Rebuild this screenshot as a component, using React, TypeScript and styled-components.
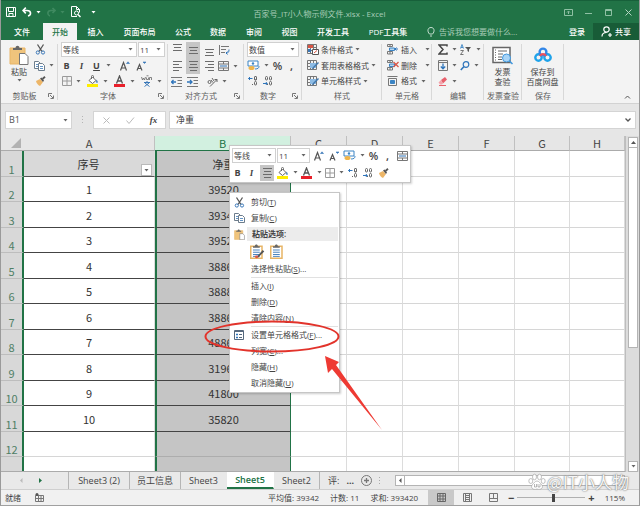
import React from "react";
import styled, { createGlobalStyle, css } from "styled-components";

const ui = `"Open Sans", "Noto Sans CJK SC", sans-serif`;
const green = "#217346";

const Global = createGlobalStyle`
  * { box-sizing: border-box; }
  html, body { margin: 0; height: 100%; }
  body { font: 8px/12px ${ui}; color: #444; background: #e6e6e6; overflow: hidden; }
  button, input, select { font: inherit; color: inherit; border: 0; padding: 0; margin: 0; background: none; }
  svg { display: block; flex: none; }
`;

/* ---------- window ---------- */
const Window = styled.div`
  height: 100vh; display: flex; flex-direction: column; position: relative;
  border-left: 1px solid #9a9a9a; border-right: 1px solid #9a9a9a; border-bottom: 1px solid #a0a0a0;
`;
const TitleBar = styled.header`
  display: grid; grid-template-columns: 1fr auto 1fr; align-items: center; height: 23px;
  background: ${green}; border-top: 1px solid #17603a; color: #a9cdb8; padding: 0 5px 3px 4px;
`;
const Title = styled.h1`font: 8px/18px ${ui}; margin: 0; padding-top: 4px;`;
const TitleGroup = styled.div<{ $end?: boolean }>`
  display: flex; align-items: center; gap: ${p => (p.$end ? 8 : 5)}px;
  justify-content: ${p => (p.$end ? "flex-end" : "flex-start")};
`;
const IconButton = styled.button<{ $on?: boolean }>`
  display: inline-flex; align-items: center; justify-content: center; gap: 4px; min-width: 12px; height: 14px;
  ${p => p.$on && css`background: #c6c6c6; width: 14px; height: 16px;`}
`;
const Tabs = styled.nav`
  display: flex; height: 17px; background: ${green}; color: #fff;
`;
const Tab = styled.button<{ $on?: boolean; $w: number }>`
  width: ${p => p.$w}px; height: 17px; font-size: 8px; font-weight: 500; white-space: nowrap;
  ${p => p.$on && css`background: #f3f3f3; color: ${green};`}
`;
const Tell = styled.label`
  display: flex; flex: 1; min-width: 0; align-items: center; gap: 4px; color: #a9cdb8; padding-left: 11px;
  input { width: 100%; min-width: 0; font-size: 8px; outline: 0; }
  input::placeholder { color: #a9cdb8; opacity: 1; }
`;
const Share = styled.button`
  display: flex; align-items: center; justify-content: center; gap: 3px; width: 46px; background: #185c37; color: #fff;
  font-weight: 500;
`;

/* ---------- ribbon ---------- */
const Ribbon = styled.section`
  display: flex; height: 64px; background: #f3f3f3; border-bottom: 1px solid #d2d2d2; position: relative;
`;
const Group = styled.div<{ $w: number }>`
  width: ${p => p.$w}px; flex: none; display: flex; flex-direction: column; padding: 2px 0 1px;
  background: linear-gradient(#d8d8d8, #d8d8d8) right center / 1px 56px no-repeat;
`;
const GroupBody = styled.div<{ $pad?: number }>`
  flex: 1; display: flex; min-height: 0; padding-left: ${p => p.$pad ?? 3}px;
`;
const GroupName = styled.div<{ $launch?: boolean }>`
  display: grid; grid-template-columns: 1fr ${p => (p.$launch ? 10 : 0)}px; align-items: center; height: 13px;
  color: #5c5c5c; white-space: nowrap;
  span { justify-self: center; }
`;
const Stack = styled.div`display: flex; flex-direction: column;`;
const Line = styled.div<{ $gap?: number; $pad?: number }>`
  display: flex; align-items: center; height: 16px; gap: ${p => p.$gap ?? 3}px; padding-left: ${p => p.$pad ?? 0}px;
`;
const BigButton = styled.button<{ $w: number }>`
  width: ${p => p.$w}px; display: flex; flex-direction: column; align-items: center; line-height: 10px; padding-top: 3px; gap: 2px;
  white-space: nowrap;
`;
const BigIcon = styled.span`height: 20px; display: grid; place-items: center;`;
const Command = styled.button<{ $w?: number }>`
  display: flex; align-items: center; gap: 2px; height: 16px; white-space: nowrap;
  ${p => p.$w && css`width: ${p.$w}px;`}
`;
const Grow = styled.span`flex: 1;`;
const Collapse = styled.button`align-self: flex-end; height: 12px; width: 18px;`;
const Letter = styled.button<{ $kind?: "b" | "i" | "u" | "n" }>`
  width: 11px; height: 14px; font-size: 9px; line-height: 14px; font-weight: 700; color: #444;
  ${p => p.$kind === "i" && css`font-style: italic; font-family: "Liberation Serif", serif;`}
  ${p => p.$kind === "u" && css`text-decoration: underline;`}
  ${p => p.$kind === "n" && css`font-size: 11px; font-weight: 600;`}
`;
const Pick = styled.span<{ $w: number }>`
  display: inline-grid; align-items: center; width: ${p => p.$w}px; height: 15px; background: #fff; border: 1px solid #d0d0d0;
  select { grid-area: 1 / 1; appearance: none; width: 100%; height: 13px; padding-left: 1px; font-size: 8px; outline: 0; }
  svg { grid-area: 1 / 1; justify-self: end; margin-right: 3px; pointer-events: none; }
`;

/* ---------- formula bar ---------- */
const FormulaBar = styled.section`
  display: flex; height: 32px; padding: 7px 3px 7px 4px; background: #e6e6e6; align-items: stretch;
`;
const NameBox = styled.label`
  display: flex; align-items: center; width: 67px; background: #fff; border: 1px solid #d4d4d4; padding: 0 3px;
  input { width: 100%; min-width: 0; font-size: 9px; outline: 0; color: #555; }
`;
const Grip = styled.span`
  width: 21px; display: flex; align-items: center; justify-content: center; color: #b4b4b4;
`;
const FxButtons = styled.div`
  display: flex; width: 73px; align-items: center; justify-content: space-around; background: #fff; border: 1px solid #d4d4d4;
`;
const FxInput = styled.label`
  flex: 1; display: flex; align-items: center; margin-left: 3px; background: #fff; border: 1px solid #d4d4d4; padding: 0 4px 0 6px;
  input { flex: 1; min-width: 0; font-size: 9px; outline: 0; }
`;

/* ---------- sheet ---------- */
const SheetArea = styled.main`flex: 1; min-height: 0; display: flex; background: #e6e6e6;`;
const SheetClip = styled.div`flex: 1; min-width: 0; overflow: hidden; border-bottom: 1px solid #ababab;`;
const Grid = styled.table`
  width: 100%; table-layout: fixed; border-collapse: separate; border-spacing: 0;
  font: 11px/14px "Noto Sans CJK SC", sans-serif; color: #333; text-align: center;
`;
const ColHead = styled.th<{ $on?: boolean }>`
  height: 15px; padding: 0; font-weight: 400; line-height: 14px; color: ${p => (p.$on ? green : "#444")};
  background: ${p => (p.$on ? "#d2f0e0" : "#e6e6e6")};
  border-right: 1px solid #c0c0c0; border-bottom: 1px solid ${p => (p.$on ? green : "#ababab")};
`;
const Corner = styled.th`
  padding: 0 3px 2px 0; background: #e6e6e6; border-bottom: 1px solid #ababab; vertical-align: bottom;
  svg { margin-left: auto; }
`;
const Row = styled.tr`
  height: 26px;
  &:nth-child(even) { height: 25px; }
`;
const RowHead = styled.th`
  padding: 0; font-weight: 400; vertical-align: bottom; color: #4f7f66; background: #d8d8d8;
  border-bottom: 1px solid #bdbdbd; border-right: 2px solid ${green};
`;
const Cell = styled.td<{ $kind: "head" | "data" | "sel" | "selEmpty" | "empty" }>`
  padding: 0; vertical-align: middle; border-right: 1px solid #dcdcdc; border-bottom: 1px solid #d6d6d6; background: #fff;
  ${p => p.$kind === "head" && css`background: #d9d9d9; border-bottom-color: #555;`}
  ${p => p.$kind === "data" && css`border-bottom-color: #444;`}
  ${p => (p.$kind === "sel" || p.$kind === "selEmpty") && css`
    background: #c5c5c5; border-left: 2px solid ${green}; border-right: 1px solid ${green};
    border-bottom-color: ${p.$kind === "sel" ? "#444" : "#adadad"};`}
`;
const HeadCell = styled.div`
  display: grid; grid-template-columns: 12px 1fr 12px; align-items: end; height: 25px; padding-right: 1px;
  span { align-self: center; }
`;
const Filter = styled.button`
  width: 11px; height: 12px; background: #fff; border: 1px solid #b9b9b9; display: grid; place-items: center;
`;
const VScroll = styled.div`
  width: 14px; display: flex; flex-direction: column; align-items: flex-end; padding: 1px 1px 0 3px; background: #dcdcdc;
  border-left: 1px solid #bdbdbd;
`;
const ScrollButton = styled.button`
  width: 10px; height: 11px; background: #fff; border: 1px solid #b4b4b4; display: grid; place-items: center; flex: none;
`;
const VThumb = styled.div`width: 10px; height: 200px; background: #fff; border: 1px solid #b4b4b4; border-top: 0;`;

/* ---------- bottom ---------- */
const SheetTabs = styled.nav`
  display: flex; height: 18px; align-items: stretch; background: #e9e9e9; font-size: 9px; border-bottom: 1px solid #cfcfcf;
`;
const SheetNav = styled.div`
  width: 68px; display: flex; align-items: center; gap: 16px; padding-left: 18px; border-right: 1px solid #b5b5b5;
`;
const SheetTab = styled.button<{ $w: number; $on?: boolean; $line?: boolean }>`
  width: ${p => p.$w}px; flex: none; white-space: nowrap;
  border-right: 1px solid ${p => (p.$line ? "#b5b5b5" : "transparent")};
  ${p => p.$on && css`background: #fff; color: ${green}; font-weight: 600; border-bottom: 2px solid ${green};`}
`;
const TabTools = styled.div`display: flex; align-items: center; gap: 7px; padding-left: 8px; width: 75px; flex: none;`;
const HScroll = styled.div`flex: 1; display: flex; align-items: center; padding-right: 14px;`;
const HThumb = styled.div`flex: 1; height: 11px; background: #fff; border: 1px solid #b4b4b4; border-left: 0;`;
const Status = styled.footer`
  display: flex; height: 15px; align-items: center; background: #f1f1f1; padding: 0 14px 0 4px; white-space: nowrap;
`;
const Stats = styled.div`display: flex; flex: 1; justify-content: flex-end; gap: 11px; padding-right: 10px;`;
const ViewButton = styled.button<{ $on?: boolean }>`
  width: 26px; height: 15px; display: grid; place-items: center; background: ${p => (p.$on ? "#c9c9c9" : "transparent")};
`;
const Zoom = styled.label`
  display: flex; align-items: center; gap: 3px; margin-left: 2px; font-size: 8px; color: #444;
  b { font-size: 11px; line-height: 12px; }
  input { appearance: none; width: 68px; height: 12px; background: linear-gradient(#b0b0b0, #b0b0b0) center / 100% 1px no-repeat; }
  input::-webkit-slider-thumb { appearance: none; width: 3px; height: 8px; background: #444; }
  output { padding-left: 7px; }
`;

/* ---------- floating ---------- */
const MiniBar = styled.div`
  position: absolute; left: 228px; top: 145px; width: 182px; padding: 1px 2px; background: #fff;
  border: 1px solid #c6c6c6; box-shadow: 1px 1px 2px rgba(0,0,0,.18);
`;
const MiniLine = styled.div`display: flex; align-items: center; height: 17px; gap: 3px;`;
const Menu = styled.menu`
  position: absolute; left: 228px; top: 192px; width: 111px; margin: 0; padding: 1px; list-style: none; background: #fff;
  border: 1px solid #c6c6c6; box-shadow: 1px 1px 2px rgba(0,0,0,.2);
`;
const Item = styled.li`
  button { display: grid; grid-template-columns: 16px 1fr; align-items: center; justify-items: center; gap: 4px; width: 100%; height: 16px; }
  button > span { justify-self: start; white-space: nowrap; }
`;
const PasteHead = styled.li`
  display: grid; grid-template-columns: 16px 1fr; align-items: center; justify-items: center; height: 16px;
  font-weight: 600;
  span { justify-self: stretch; background: #ececec; padding-left: 5px; line-height: 14px; }
`;
const PasteRow = styled.li`display: flex; gap: 5px; height: 19px; align-items: center; padding-left: 19px;`;
const Rule = styled.li`height: 1px; margin: 0 0 0 20px; background: #e1e1e1;`;
const Overlay = styled.svg`position: absolute; left: 190px; top: 310px; pointer-events: none;`;
const Watermark = styled.div`
  position: absolute; right: 10px; bottom: 12px; display: flex; align-items: center; gap: 1px;
  font: 17px/22px "Noto Sans CJK SC", sans-serif; color: rgba(255,255,255,.95); pointer-events: none;
  text-shadow: 0 0 1px #777, 0 0 2px #888;
`;

/* ---------- icons ---------- */
const Caret = ({ c = "#666" }: { c?: string }) => (
  <svg width="5" height="3" viewBox="0 0 5 3"><path d="M0.5 0h4L2.5 2.5z" fill={c} /></svg>
);
const CaretUp = () => <svg width="5" height="3" viewBox="0 0 5 3"><path d="M0 3h5L2.5 0z" fill="#555" /></svg>;
const Launcher = () => (
  <svg width="6" height="6" viewBox="0 0 6 6" fill="none" stroke="#777"><path d="M.5 4V.5H4M2 2l3 3M5.5 2.5v3h-3" /></svg>
);
const Save = () => (
  <svg width="10" height="10" viewBox="0 0 10 10" fill="none" stroke="#fff"><path d="M.5.5h9v9h-9zM2.500.5v4h5v-4M3 9.500V6.500h4v3" /></svg>
);
const Undo = ({ flip }: { flip?: boolean }) => (
  <svg width="10" height="10" viewBox="0 0 10 10" fill="none" stroke={flip ? "#3f8a60" : "#fff"} strokeWidth="1.600">
    {flip ? <path d="M9 3.500H5C1 3.500 1 8 4 9M6.500 1L9 3.500 6.500 6" /> : <path d="M1 3.500h4c4.500 0 4.500 4.500 1 5.500M3.800.6L1 3.500l2.800 2.900" />}
  </svg>
);
const Preview = () => (
  <svg width="10" height="12" viewBox="0 0 10 12" fill="none" stroke="#fff"><path d="M6 10.500H.5V.5h5l3 3v3M5.500.5v3h3" /><circle cx="5.500" cy="7" r="2" /><path d="M7 8.500l2.500 2.500" strokeWidth="1.500" /></svg>
);
const Scissors = () => (
  <svg width="11" height="11" viewBox="0 0 11 11" fill="none"><path d="M2.500.5L7 7.500M8.500.5L4 7.500" stroke="#555" strokeWidth="1.300" /><circle cx="2.800" cy="8.500" r="1.600" stroke="#3b78b8" /><circle cx="8" cy="8.500" r="1.600" stroke="#3b78b8" /></svg>
);
const Copy = () => (
  <svg width="11" height="10" viewBox="0 0 11 10" fill="#fff" stroke="#6d7d8c"><path d="M.5.5h4l1.500 1.500v5.500H.5z" /><path d="M4.500 2.500h4L10.500 4.500v5h-6z" /><path d="M6 5.500h3M6 7.500h3M2 3.500h2M2 5.500h2" stroke="#3b78b8" strokeWidth=".8" /></svg>
);
const Brush = () => (
  <svg width="11" height="10" viewBox="0 0 11 10"><path d="M1 5l4-2 3 3-3 4C3 9 1.500 7.500 1 5z" fill="#edb668" /><path d="M5 2.500L6.500 1.500 9 4.500 8 6z" fill="#555" /><path d="M7.500 3L10 .8" stroke="#555" strokeWidth="1.800" /></svg>
);
const Clipboard = ({ s = 20, kind = "page" }: { s?: number; kind?: "page" | "lines" | "brush" }) => (
  <svg width={s} height={s} viewBox="0 0 20 20">
    <path d="M1 3h15v16H1z" fill={kind === "page" ? "#f0c47c" : "#fff"} stroke="#e8b566" strokeWidth={kind === "page" ? 1 : 2} />
    <path d="M4 5V3h2.500c0-3 4-3 4 0H13v2z" fill="#666" />
    {kind === "page" && <path d="M10.500 8.500h5.500l3 3v8h-8.500z" fill="#fff" stroke="#777" />}
    {kind !== "page" && <path d="M4 8h9M4 11h9M4 14h9M4 16.500h9" stroke="#3b78b8" strokeWidth="1.200" />}
    {kind === "brush" && <path d="M9 17l8-9 2 2-8 8z" fill="#555" />}
    {kind === "brush" && <path d="M6 16l4-1 1 3c-2 2-4 1-5-2z" fill="#d8584a" />}
  </svg>
);
const Borders = () => (
  <svg width="10" height="10" viewBox="0 0 10 10" fill="none" stroke="#9a9a9a"><path d="M.5.5h9v9h-9zM5 1v8M1 5h8" /></svg>
);
const Fill = () => (
  <svg width="12" height="12" viewBox="0 0 12 12"><path d="M2 5.500L5.500 2 9 5.500 5.500 8.500z" fill="#fff" stroke="#666" /><path d="M4.500 4V1.500c0-1.500 2-1.500 2 0V3" fill="none" stroke="#666" /><path d="M9.500 4.500c1.500 1.500 1.500 3.500.5 3.500s-1-2-.5-3.500z" fill="#3b78b8" /><path d="M0 9h11v3H0z" fill="#ffee00" /></svg>
);
const FontColor = () => (
  <svg width="12" height="12" viewBox="0 0 12 12"><path d="M2.500 8.500L5.500 1l3 7.500M3.500 6h4" fill="none" stroke="#555" strokeWidth="1.300" /><path d="M0 9h11v3H0z" fill="#e8202a" /></svg>
);
const SizeA = ({ down }: { down?: boolean }) => (
  <svg width="10" height="10" viewBox="0 0 10 10" fill="none" stroke="#555"><path d={down ? "M1 9.500l2.500-6 2.500 6M2 7.500h3" : "M.5 9.500l3-8 3 8M1.500 7h4"} strokeWidth="1.200" /><path d={down ? "M7 1l1.500 1.500L10 1z" : "M6.500 2.500L8 .8l1.500 1.700z"} fill="#3b78b8" stroke="#3b78b8" strokeWidth=".6" /></svg>
);
const Phonetic = () => (
  <svg width="12" height="12" viewBox="0 0 12 12" fill="none" stroke="#666"><path d="M.5 2l1 3 1-2 1 2 1-3M5.500 2.500v2h2v-2M8.500 5V2.500h2V5M5.500.8h2" strokeWidth=".8" /><path d="M3 7.500h6M6 6v1.500M4 8l4.500 3.500M8 8l-4.500 3.500" stroke="#3b78b8" /></svg>
);
const alignPaths = {
  top: "M0 .5h9M1 3.500h7M0 6.500h9",
  mid: "M0 3.500h9M1 6.500h7M0 9.500h9",
  low: "M0 5.500h9M1 8.500h7M0 11.500h9",
  left: "M0 1.500h9M0 4.500h6M0 7.500h9M0 10.500h6",
  center: "M0 1.500h9M1 4.500h7M0 7.500h9M1 10.500h7",
  right: "M0 1.500h9M3 4.500h6M0 7.500h9M3 10.500h6",
};
const Align = ({ as }: { as: keyof typeof alignPaths }) => (
  <svg width="9" height="12" viewBox="0 0 9 12" stroke="#6c6c6c"><path d={alignPaths[as]} /></svg>
);
const Indent = ({ out }: { out?: boolean }) => (
  <svg width="12" height="10" viewBox="0 0 12 10" fill="none" stroke="#777"><path d="M0 .5h11M6.500 3.500H11M6.500 6.500H11M0 9.500h11" /><path d={out ? "M5 5H.5M2.500 3L.5 5l2 2" : "M0 5h4.500M3 3l2 2-2 2"} stroke="#2f75bb" strokeWidth="1.300" /></svg>
);
const Orient = () => (
  <svg width="11" height="10" viewBox="0 0 11 10" fill="none" stroke="#666"><path d="M3 9.500L10 2.500M7.500 2.500H10V5" /><circle cx="2.500" cy="5" r="1.500" /><path d="M4 3l2 2.500M5 1l2 3" /></svg>
);
const Wrap = () => (
  <svg width="11" height="10" viewBox="0 0 11 10" fill="none" stroke="#777"><path d="M.5 0v10M2 1.500h8M2 4.500h5M2 7.500h4" /><path d="M10 4.500c0 3-1 3.500-3 3.500M8.500 6.500L7 8l1.500 1.500" stroke="#2f75bb" /></svg>
);
const Merge = () => (
  <svg width="11" height="10" viewBox="0 0 11 10" fill="none" stroke="#777"><path d="M.5.5h10v9H.5zM.5 3h10M.5 7h10M5.500.5V3M5.500 7v2.500" /><path d="M2 5h7" stroke="#2f75bb" /></svg>
);
const Money = () => (
  <svg width="13" height="11" viewBox="0 0 13 11"><path d="M1 1h10v5H1z" fill="#fff" stroke="#3b84c4" /><circle cx="6" cy="3.500" r="1.200" fill="#3b84c4" /><ellipse cx="4.500" cy="8" rx="3" ry="2" fill="#f0b54a" /><path d="M8 9c3 0 4-1 4-3" fill="none" stroke="#3b84c4" /></svg>
);
const Decimal = ({ less }: { less?: boolean }) => (
  <svg width="11" height="10" viewBox="0 0 11 10" fill="none" stroke="#666"><rect x={less ? 2.500 : 6.500} y=".5" width="2" height="3.500" rx="1" /><rect x="6.500" y=".5" width="2" height="3.500" rx="1" /><rect x="6.500" y="5.500" width="2" height="3.500" rx="1" /><path d={less ? "M0 7.500h4M2.800 6l1.500 1.500L2.800 9" : "M4.500 2.500h-4M2 1L.5 2.500 2 4"} stroke="#2f75bb" /><path d="M4 8.500h1" /></svg>
);
const StyleIcon = ({ red }: { red?: boolean }) => (
  <svg width="12" height="11" viewBox="0 0 12 11" fill="none"><path d="M.5.5h9v9h-9zM.5 3.500h9M.5 6.500h9M3.500.5v9M6.500.5v9" stroke="#777" />{red ? <><path d="M1 1h5v3H1z" fill="#d85545" /><path d="M1 5h3v3H1z" fill="#3b78b8" /><path d="M5.500 5.500h6v5h-6z" fill="#fff" stroke="#555" /><path d="M7 9l3-2.500" stroke="#d85545" /></> : <><path d="M3 3h6v5H3z" fill="#8dbbe4" /><path d="M4 10l2-3 5-5 1 1-5 5z" fill="#4178ad" /></>}</svg>
);
const CellIcon = ({ kind }: { kind: "add" | "del" | "fmt" }) => (
  <svg width="12" height="11" viewBox="0 0 12 11" fill="none" stroke="#777">
    {kind === "fmt" ? <><path d="M1.500 2.500h8v7h-8zM.5.5h10" /><path d="M3.500 4.500h4v3h-4z" fill="#3b84c4" stroke="#3b84c4" /></> : <><path d="M.5.5h5v2h-5zM.5 7.500h5v2.500h-5zM3 .5v2M3 7.500V10" /><path d="M2.500 4h5v2.500h-5z" fill="#b9d6ee" stroke="#3b84c4" />{kind === "del" ? <path d="M6.500 2l5 5M11.500 2l-5 5" stroke="#d85545" strokeWidth="1.300" /> : <path d="M11 5H8M9.500 3.500L8 5l1.500 1.500" stroke="#2f75bb" />}</>}
  </svg>
);
const Sigma = () => <svg width="10" height="11" viewBox="0 0 10 11" fill="none" stroke="#444" strokeWidth="1.500"><path d="M9 2.500V1H1l4 4.500L1 10h8V8.500" /></svg>;
const Sort = () => <svg width="12" height="11" viewBox="0 0 12 11" fill="none"><path d="M.5 4.500L2 .5l1.500 4M1 3.500h2" stroke="#3b84c4" strokeWidth=".9" /><path d="M.5 6.500h3l-3 4h3" stroke="#666" strokeWidth=".9" /><path d="M5 3h6L9 5.500V8L7.500 7V5.500z" fill="#555" /></svg>;
const FillDown = () => <svg width="10" height="11" viewBox="0 0 10 11" fill="none"><path d="M.5.5h9v10h-9zM.5 2.500h9" stroke="#777" /><path d="M5 3.500v5M2.800 6.500L5 8.800l2.200-2.300" stroke="#2f75bb" strokeWidth="1.300" /></svg>;
const Find = () => <svg width="10" height="10" viewBox="0 0 10 10" fill="none" stroke="#2f75bb"><circle cx="6" cy="3.500" r="2.800" strokeWidth="1.200" /><path d="M4 5.500L.8 9" strokeWidth="1.600" /></svg>;
const Eraser = () => <svg width="10" height="9" viewBox="0 0 10 9"><path d="M3 3l4-3 2 2.500-4 4z" fill="#e8606c" /><path d="M3 3L.5 5.500l1.500 2h2l1-1z" fill="#f4a5ad" /><path d="M1 8.500h7" stroke="#e8606c" /></svg>;
const Invoice = () => (
  <svg width="21" height="19" viewBox="0 0 21 19" fill="none"><path d="M1 1.500h17v15H1z" fill="#fff" stroke="#666" strokeWidth="1.500" /><path d="M3.500 1v16" stroke="#666" strokeDasharray="1 1.500" /><path d="M6 5h9M6 8h5M6 11h4M6 13.500h4" stroke="#666" /><circle cx="14.500" cy="12" r="4" fill="#a9d4f6" stroke="#3f97dd" /><path d="M17.500 15l3 3" stroke="#3f97dd" strokeWidth="1.500" /></svg>
);
const Cloud = () => (
  <svg width="18" height="16" viewBox="0 0 18 16" fill="none" strokeWidth="2.400"><circle cx="4.500" cy="10.500" r="3.200" stroke="#1fa3ea" /><circle cx="13.500" cy="10.500" r="3.200" stroke="#1fa3ea" /><circle cx="9" cy="5" r="3.400" stroke="#3186e8" /><path d="M6 9c1.500-2.500 4.500-2.500 6 0" stroke="#e9505d" /></svg>
);
const Gear = () => <svg width="10" height="10" viewBox="0 0 10 10" fill="none" stroke="#56697e"><path d="M.5.5h9v9h-9zM.5 1.500h9" /><path d="M2 4.500h2M2 7.500h2" stroke="#2f75bb" strokeWidth="1.500" /><path d="M5 4.500h3M5 7.500h3" /></svg>;
const Paw = () => (
  <svg width="18" height="18" viewBox="0 0 18 18" fill="#fff" stroke="#999" strokeWidth=".6"><ellipse cx="2.800" cy="8" rx="2" ry="2.500" /><ellipse cx="6.500" cy="4" rx="2" ry="2.800" /><ellipse cx="11.500" cy="4" rx="2" ry="2.800" /><ellipse cx="15.200" cy="8" rx="2" ry="2.500" /><path d="M9 8c2 0 3 2 4.500 3.500 2.500 3-.5 6-4.500 4.500-4 1.500-7-1.500-4.500-4.500C6 10 7 8 9 8z" /><path d="M6.500 11v3h2v-3M10 11v3h2v-3" fill="none" stroke="#888" /></svg>
);

/* ---------- parts ---------- */
const Select = ({ w, value, label }: { w: number; value: string; label: string }) => (
  <Pick $w={w}><select aria-label={label} defaultValue={value}><option>{value}</option></select><Caret /></Pick>
);
const Tool = ({ label, on, drop, children }: { label: string; on?: boolean; drop?: boolean; children: React.ReactNode }) => (
  <IconButton aria-label={label} $on={on}>{children}{drop && <Caret />}</IconButton>
);
const Section = ({ w, name, pad, launch, children }: { w: number; name: string; pad?: number; launch?: boolean; children: React.ReactNode }) => (
  <Group $w={w}>
    <GroupBody $pad={pad}>{children}</GroupBody>
    <GroupName $launch={launch}><span>{name}</span>{launch && <Launcher />}</GroupName>
  </Group>
);
const MenuItem = ({ text, k, dots, icon }: { text: string; k: string; dots?: boolean; icon?: React.ReactNode }) => (
  <Item><button>{icon ?? <i />}<span>{text}(<u>{k}</u>){dots && "..."}</span></button></Item>
);

const values = ["39520", "39340", "39520", "38860", "38880", "38860", "48860", "31960", "41800", "35820"];
const blanks = ["C", "D", "E", "F", "G", "H"];
const tabs: [string, number][] = [["插入", 37], ["页面布局", 51], ["公式", 36], ["数据", 34], ["审阅", 38], ["视图", 33], ["开发工具", 54], ["PDF工具集", 56]];

export default function App() {
  return (
    <Window>
      <Global />
      <TitleBar>
        <TitleGroup>
          <Tool label="保存"><Save /></Tool>
          <IconButton aria-label="撤消"><Undo /><Caret c="#fff" /></IconButton>
          <IconButton aria-label="恢复"><Undo flip /><Caret c="#3f8a60" /></IconButton>
          <Tool label="打印预览"><Preview /></Tool>
          <IconButton aria-label="自定义快速访问工具栏"><Caret c="#fff" /></IconButton>
        </TitleGroup>
        <Title>百家号_IT小人物示例文件.xlsx - Excel</Title>
        <TitleGroup $end>
          <IconButton aria-label="功能区显示选项"><svg width="9" height="7" viewBox="0 0 9 7" fill="none" stroke="#8fc0a4"><path d="M.5.5h8v6h-8zM4.500 5V2.500M3 3.500l1.500-1.500L6 3.500" /></svg></IconButton>
          <IconButton aria-label="最小化"><svg width="7" height="7" viewBox="0 0 7 7" stroke="#8fc0a4"><path d="M0 4.500h7" /></svg></IconButton>
          <IconButton aria-label="最大化"><svg width="7" height="7" viewBox="0 0 7 7" fill="none" stroke="#8fc0a4"><path d="M.5.5h6v6h-6zM.5 1.500h6" /></svg></IconButton>
          <IconButton aria-label="关闭"><svg width="7" height="7" viewBox="0 0 7 7" stroke="#b5d6c3"><path d="M.5.5l6 6M6.500.5l-6 6" /></svg></IconButton>
        </TitleGroup>
      </TitleBar>
      <Tabs>
        <Tab $w={42}>文件</Tab>
        <Tab $w={34} $on>开始</Tab>
        {tabs.map(([t, w]) => <Tab key={t} $w={w}>{t}</Tab>)}
        <Tell>
          <svg width="8" height="10" viewBox="0 0 8 10" fill="none" stroke="#c4decf"><path d="M2.500 7C0 4.500.5.5 4 .5S8 4.500 5.500 7zM3 9h2" /></svg>
          <input aria-label="告诉我您想要做什么" placeholder="告诉我您想要做什么..." />
        </Tell>
        <Tab $w={32}>登录</Tab>
        <Share>
          <svg width="11" height="11" viewBox="0 0 11 11" fill="none" stroke="#fff" strokeWidth="1.200"><circle cx="5.500" cy="3.500" r="2.700" /><path d="M1 10.500c0-3 2-4 4.500-4M7 9h4M9 7v4" /></svg>
          共享
        </Share>
      </Tabs>

      <Ribbon>
        <Section w={57} name="剪贴板" pad={6} launch>
          <BigButton $w={24}><BigIcon><Clipboard /></BigIcon>粘贴<Caret /></BigButton>
          <Stack>
            <Line $pad={3}><Tool label="剪切"><Scissors /></Tool></Line>
            <Line $pad={3}><Tool label="复制" drop><Copy /></Tool></Line>
            <Line $pad={3}><Tool label="格式刷"><Brush /></Tool></Line>
          </Stack>
        </Section>
        <Section w={110} name="字体" launch>
          <Stack>
            <Line $gap={1}><Select w={76} value="等线" label="字体" /><Select w={27} value="11" label="字号" /></Line>
            <Line $gap={4}>
              <Letter>B</Letter><Letter $kind="i">I</Letter><Letter $kind="u">U</Letter><Caret />
              <span /><Tool label="增大字号"><SizeA /></Tool><Tool label="减小字号"><SizeA down /></Tool>
            </Line>
            <Line $gap={6} $pad={1}>
              <Tool label="边框" drop><Borders /></Tool><Tool label="填充颜色" drop><Fill /></Tool>
              <Tool label="字体颜色" drop><FontColor /></Tool><Tool label="拼音" drop><Phonetic /></Tool>
            </Line>
          </Stack>
        </Section>
        <Section w={76} name="对齐方式" launch>
          <Stack>
            <Line>
              <Tool label="顶端对齐"><Align as="top" /></Tool><Tool label="垂直居中" on><Align as="mid" /></Tool><Tool label="底端对齐"><Align as="low" /></Tool>
              <Tool label="自动换行"><Wrap /></Tool>
            </Line>
            <Line>
              <Tool label="左对齐"><Align as="left" /></Tool><Tool label="居中" on><Align as="center" /></Tool><Tool label="右对齐"><Align as="right" /></Tool>
              <Tool label="合并后居中" drop><Merge /></Tool>
            </Line>
            <Line $gap={4}>
              <Tool label="减少缩进"><Indent out /></Tool><Tool label="增加缩进"><Indent /></Tool>
              <span /><Tool label="方向" drop><Orient /></Tool>
            </Line>
          </Stack>
        </Section>
        <Section w={58} name="数字" launch>
          <Stack>
            <Line><Select w={52} value="数值" label="数字格式" /></Line>
            <Line><Tool label="会计格式" drop><Money /></Tool><Letter $kind="n">%</Letter><Letter $kind="n">,</Letter></Line>
            <Line><Tool label="增加小数位数"><Decimal /></Tool><Tool label="减少小数位数"><Decimal less /></Tool></Line>
          </Stack>
        </Section>
        <Section w={80} name="样式" pad={5}>
          <Stack>
            <Command><StyleIcon red />条件格式<Caret /></Command>
            <Command><StyleIcon />套用表格格式<Caret /></Command>
            <Command><StyleIcon />单元格样式<Caret /></Command>
          </Stack>
        </Section>
        <Section w={50} name="单元格" pad={5}>
          <Stack>
            <Command $w={43}><CellIcon kind="add" />插入<Grow /><Caret /></Command>
            <Command $w={43}><CellIcon kind="del" />删除<Grow /><Caret /></Command>
            <Command $w={39}><CellIcon kind="fmt" />格式<Grow /><Caret /></Command>
          </Stack>
        </Section>
        <Section w={52} name="编辑" pad={6}>
          <Stack>
            <Line><Tool label="求和" drop><Sigma /></Tool><Tool label="排序和筛选" drop><Sort /></Tool></Line>
            <Line><Tool label="填充" drop><FillDown /></Tool><Tool label="查找" drop><Find /></Tool></Line>
            <Line><Tool label="清除" drop><Eraser /></Tool></Line>
          </Stack>
        </Section>
        <Section w={38} name="发票查验" pad={0}>
          <BigButton $w={37}><BigIcon><Invoice /></BigIcon><span>发票<br />查验</span></BigButton>
        </Section>
        <Section w={42} name="保存" pad={0}>
          <BigButton $w={41}><BigIcon><Cloud /></BigIcon><span>保存到<br />百度网盘</span></BigButton>
        </Section>
        <Grow />
        <Collapse aria-label="折叠功能区"><svg width="14" height="4" viewBox="0 0 14 4" fill="none" stroke="#555"><path d="M4 3.500L6.500 1 9 3.500" /></svg></Collapse>
      </Ribbon>

      <FormulaBar>
        <NameBox><input aria-label="名称框" defaultValue="B1" /><Caret /></NameBox>
        <Grip><svg width="2" height="9" viewBox="0 0 2 9" fill="#b4b4b4"><path d="M0 0h1v1H0zM0 3h1v1H0zM0 6h1v1H0z" /></svg></Grip>
        <FxButtons>
          <IconButton aria-label="取消"><svg width="7" height="7" viewBox="0 0 7 7" stroke="#bbb"><path d="M.5.5l6 6M6.500.5l-6 6" /></svg></IconButton>
          <IconButton aria-label="输入"><svg width="9" height="7" viewBox="0 0 9 7" fill="none" stroke="#bbb"><path d="M.5 3.500l2.500 3 5-6" /></svg></IconButton>
          <Letter $kind="i">fx</Letter>
        </FxButtons>
        <FxInput><input aria-label="编辑栏" defaultValue="净重" /><svg width="6" height="4" viewBox="0 0 6 4" fill="none" stroke="#555" strokeWidth="1.300"><path d="M.5.5L3 3 5.500.5" /></svg></FxInput>
      </FormulaBar>

      <SheetArea>
        <SheetClip>
          <Grid>
            <colgroup><col width="23" /><col width="131" /><col width="136" /><col width="56" /><col width="56" /><col width="56" /><col width="56" /><col width="55" /><col /></colgroup>
            <thead><tr>
              <Corner><svg width="10" height="10" viewBox="0 0 10 10"><path d="M10 0v10H0z" fill="#b2b2b2" /></svg></Corner>
              <ColHead>A</ColHead><ColHead $on>B</ColHead>
              {blanks.map(c => <ColHead key={c}>{c}</ColHead>)}
            </tr></thead>
            <tbody>
              <Row>
                <RowHead>1</RowHead>
                <Cell $kind="head"><HeadCell><i /><span>序号</span><Filter aria-label="筛选"><Caret /></Filter></HeadCell></Cell>
                <Cell $kind="sel">净重</Cell>
                {blanks.map(c => <Cell key={c} $kind="empty" />)}
              </Row>
              {values.map((v, i) => (
                <Row key={i}>
                  <RowHead>{i + 2}</RowHead><Cell $kind="data">{i + 1}</Cell><Cell $kind="sel">{v}</Cell>
                  {blanks.map(c => <Cell key={c} $kind="empty" />)}
                </Row>
              ))}
              {["12", ""].map(n => (
                <Row key={n}>
                  <RowHead>{n}</RowHead><Cell $kind="empty" /><Cell $kind="selEmpty" />
                  {blanks.map(c => <Cell key={c} $kind="empty" />)}
                </Row>
              ))}
            </tbody>
          </Grid>
        </SheetClip>
        <VScroll>
          <ScrollButton aria-label="向上滚动"><CaretUp /></ScrollButton>
          <VThumb />
          <Grow />
          <ScrollButton aria-label="向下滚动"><Caret /></ScrollButton>
        </VScroll>
      </SheetArea>

      <SheetTabs>
        <SheetNav>
          <svg width="4" height="5" viewBox="0 0 4 5"><path d="M3.500 0v5L1 2.500z" fill="#bbb" /></svg>
          <svg width="4" height="5" viewBox="0 0 4 5"><path d="M0 0v5l3-2.500z" fill={green} /></svg>
        </SheetNav>
        <SheetTab $w={61} $line>Sheet3 (2)</SheetTab>
        <SheetTab $w={51} $line>员工信息</SheetTab>
        <SheetTab $w={46}>Sheet3</SheetTab>
        <SheetTab $w={47} $on>Sheet5</SheetTab>
        <SheetTab $w={46} $line>Sheet2</SheetTab>
        <TabTools>
          <span>评:</span><b>...</b>
          <svg width="11" height="11" viewBox="0 0 11 11" fill="none" stroke="#777"><circle cx="5.500" cy="5.500" r="5" /><path d="M5.500 3v5M3 5.500h5" strokeWidth="1.300" /></svg>
          <svg width="2" height="8" viewBox="0 0 2 8" fill="#aaa"><path d="M0 0h1v1H0zM0 3h1v1H0zM0 6h1v1H0z" /></svg>
        </TabTools>
        <HScroll>
          <ScrollButton aria-label="向左滚动"><svg width="4" height="5" viewBox="0 0 4 5"><path d="M3.500 0v5L1 2.500z" fill="#555" /></svg></ScrollButton>
          <HThumb />
        </HScroll>
      </SheetTabs>
      <Status>
        <span>就绪</span>
        <Line $pad={14}><svg width="9" height="9" viewBox="0 0 9 9" fill="none" stroke="#777"><path d="M.5 2.500h8v6h-8zM.5 5.500h8M3.500 2.500v6M6 2.500v6" /><circle cx="2" cy="1.500" r="1.500" fill="#555" stroke="none" /></svg></Line>
        <Stats><span>平均值: 39342</span><span>计数: 11</span><span>求和: 393420</span></Stats>
        <ViewButton $on aria-label="普通"><svg width="9" height="9" viewBox="0 0 9 9" fill="none" stroke="#666"><path d="M.5.5h8v8h-8zM.5 3h8M.5 6h8M3 .5v8M6 .5v8" /></svg></ViewButton>
        <ViewButton aria-label="页面布局"><svg width="9" height="9" viewBox="0 0 9 9" fill="none" stroke="#777"><path d="M.5.5h8v8h-8zM2.500.5v8M6.500.5v8M3 2.500h3M3 4.500h3M3 6.500h3" /></svg></ViewButton>
        <ViewButton aria-label="分页预览"><svg width="9" height="9" viewBox="0 0 9 9" fill="none" stroke="#777"><path d="M.5.5h8v8h-8zM4.500.5v5M.5 5.500h8" /></svg></ViewButton>
        <Zoom><b>−</b><input type="range" aria-label="缩放" defaultValue="53" /><b>+</b><output>115%</output></Zoom>
      </Status>

      <MiniBar>
        <MiniLine>
          <Line $gap={1}><Select w={44} value="等线" label="浮动字体" /><Select w={33} value="11" label="浮动字号" /></Line>
          <Tool label="增大字号"><SizeA /></Tool><Tool label="减小字号"><SizeA down /></Tool>
          <Tool label="会计格式" drop><Money /></Tool><Letter $kind="n">%</Letter><Letter $kind="n">,</Letter><Tool label="合并"><Merge /></Tool>
        </MiniLine>
        <MiniLine>
          <Letter>B</Letter><Letter $kind="i">I</Letter><Tool label="居中" on><Align as="center" /></Tool>
          <Tool label="填充颜色" drop><Fill /></Tool><Tool label="字体颜色" drop><FontColor /></Tool><Tool label="边框" drop><Borders /></Tool>
          <Tool label="增加小数位数"><Decimal /></Tool><Tool label="减少小数位数"><Decimal less /></Tool><Tool label="格式刷"><Brush /></Tool>
        </MiniLine>
      </MiniBar>

      <Menu>
        <MenuItem text="剪切" k="T" icon={<Scissors />} />
        <MenuItem text="复制" k="C" icon={<Copy />} />
        <PasteHead><Clipboard s={11} /><span>粘贴选项:</span></PasteHead>
        <PasteRow><Tool label="保留源格式"><Clipboard s={15} kind="brush" /></Tool><Tool label="粘贴"><Clipboard s={15} kind="lines" /></Tool></PasteRow>
        <MenuItem text="选择性粘贴" k="S" dots />
        <Rule />
        <MenuItem text="插入" k="I" />
        <MenuItem text="删除" k="D" />
        <MenuItem text="清除内容" k="N" />
        <Rule />
        <MenuItem text="设置单元格格式" k="F" dots icon={<Gear />} />
        <MenuItem text="列宽" k="C" dots />
        <MenuItem text="隐藏" k="H" />
        <MenuItem text="取消隐藏" k="U" />
      </Menu>

      <Overlay width="200" height="125" viewBox="0 0 200 125">
        <ellipse cx="81" cy="26.500" rx="66.500" ry="15" fill="none" stroke="#e2332b" strokeWidth="2" />
        <path d="M134 46l14 6-3 3L191 120 141 59l-4 4z" fill="#ee3a33" />
      </Overlay>
      <Watermark><Paw />@IT小人物</Watermark>
    </Window>
  );
}
